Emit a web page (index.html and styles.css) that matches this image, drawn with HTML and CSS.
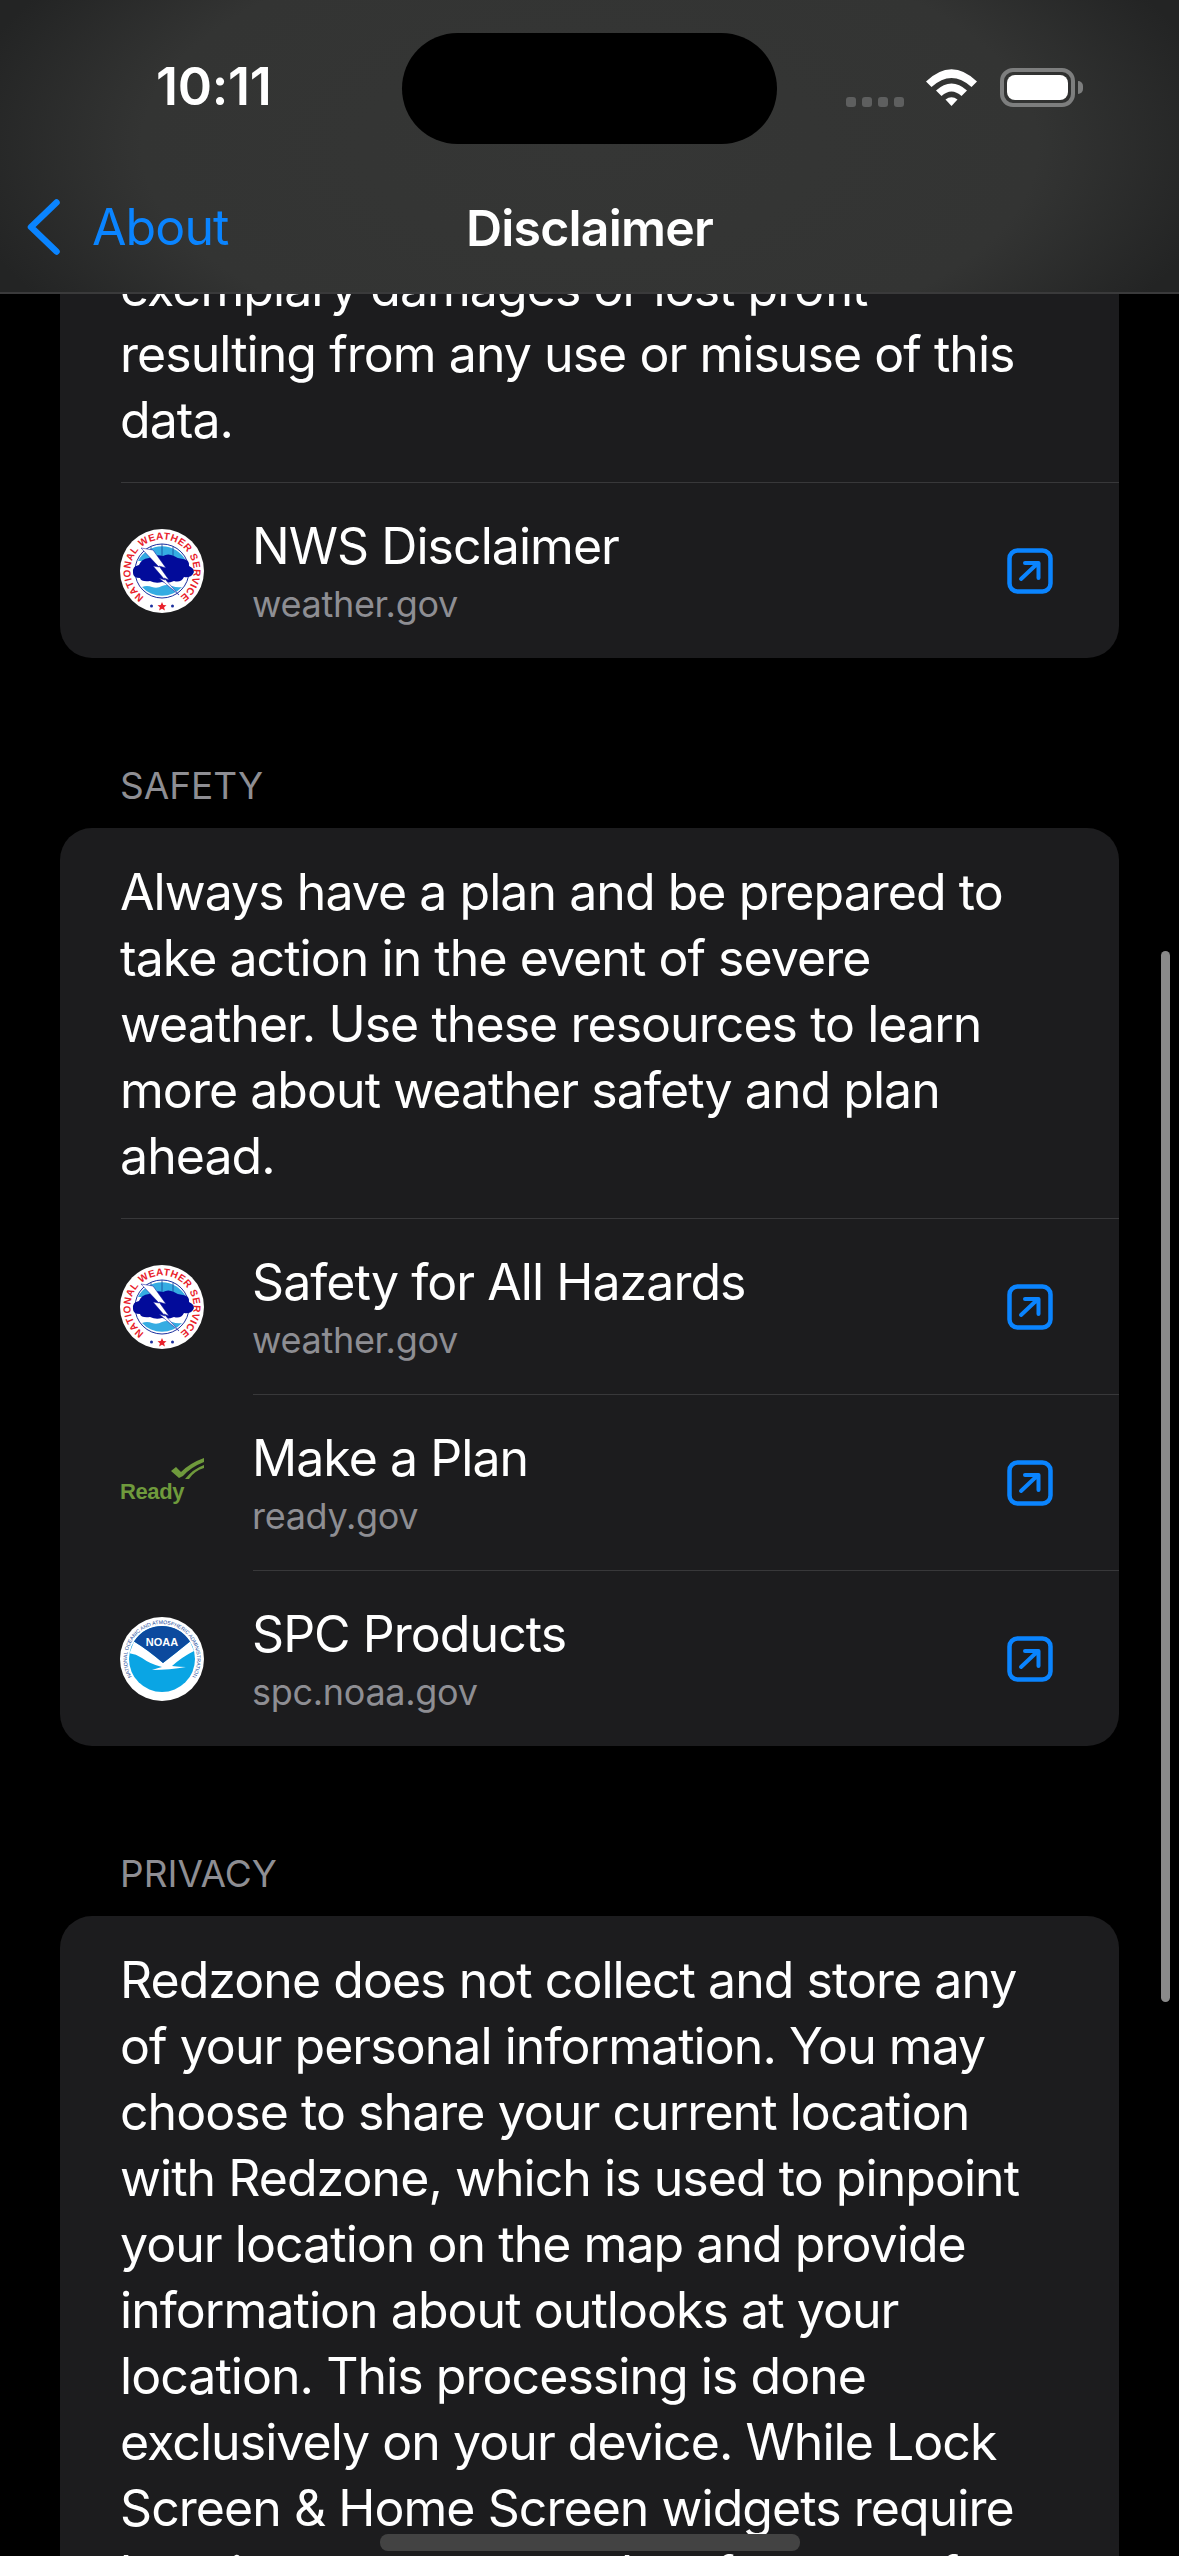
FILE: index.html
```html
<!DOCTYPE html>
<html lang="en">
<head>
    <meta charset="UTF-8">
    <title>Disclaimer</title>
    <link rel="stylesheet" href="styles.css">
</head>
<body>
    <svg class="defs" width="0" height="0">
        <defs>
            <path id="nws-ring" d="M42 73.500A31.500 31.500 0 1 1 42.010 73.500"/>
            <path id="noaa-top" d="M42 77A35 35 0 1 1 42.010 77"/>
            <path id="noaa-bottom" d="M42 2A40 40 0 1 0 41.990 2"/>
            <symbol id="logo-nws" viewBox="0 0 84 84">
                <circle cx="42" cy="42" r="42" fill="#fff"/>
                <circle cx="42" cy="42" r="27" fill="#fff" stroke="#1b2f9e" stroke-width="1"/>
                <path d="M18 32a27 27 0 0 1 48 0z" fill="#35ace2"/>
                <path d="M31 17v14M42 15v14M53 17v14" stroke="#14459c" stroke-width="0.800"/>
                <path d="M22 58a27 27 0 0 0 40 0q-5 1-10-1q-5-2-10 0q-5 3-10 1q-5-2-10 0z" fill="#35ace2"/>
                <path d="M13 44q-1-7 6-8q2-6 10-7q6-4 14-2q5-3 11 0q4 3 9 3q7 1 6 7q7 3 4 8q-3 4-9 3q-3 6-10 4q-6 3-12 1q-6 2-12-1q-9 1-10-3q-7 0-7-5z" fill="#020b9a"/>
                <path d="M21 19l12 2l13 18l-7-2l10 14l-5-2l15 17l-20-17l6 2l-12-14l6 1z" fill="#fff" stroke="#020b9a" stroke-width="0.500"/>
                <text class="logo-ring-text"><textPath href="#nws-ring" startOffset="50%" text-anchor="middle">NATIONAL WEATHER SERVICE</textPath></text>
                <path d="M42 73l1.300 3l3.200.3l-2.400 2l.8 3.100l-2.900-1.700l-2.900 1.700l.8-3.100l-2.400-2l3.200-.3z" fill="#e8202a"/>
                <circle cx="31.500" cy="77" r="1.500" fill="#1b2f9e"/>
                <circle cx="52.500" cy="77" r="1.500" fill="#1b2f9e"/>
            </symbol>
            <symbol id="icon-open" viewBox="0 0 46 46">
                <rect x="2.500" y="2.500" width="41" height="41" rx="8" fill="none" stroke="#0a84ff" stroke-width="4.500"/>
                <path d="M14 31l17-16M18 15h13.500v15" fill="none" stroke="#0a84ff" stroke-width="4" stroke-linecap="round" stroke-linejoin="round"/>
            </symbol>
        </defs>
    </svg>

    <div class="screen">
        <div class="scroller">
            <section class="group">
                <p class="blurb">You agree that in no event<br>exemplary damages or lost profit<br>resulting from any use or misuse of this<br>data.</p>
                <a class="link-row row-full" href="#">
                    <svg class="logo"><use href="#logo-nws"/></svg>
                    <div class="link-text"><div class="link-title">NWS Disclaimer</div><div class="link-host">weather.gov</div></div>
                    <svg class="open"><use href="#icon-open"/></svg>
                </a>
            </section>

            <h2 class="group-head">SAFETY</h2>
            <section class="group">
                <p class="blurb">Always have a plan and be prepared to<br>take action in the event of severe<br>weather. Use these resources to learn<br>more about weather safety and plan<br>ahead.</p>
                <a class="link-row row-full" href="#">
                    <svg class="logo"><use href="#logo-nws"/></svg>
                    <div class="link-text"><div class="link-title">Safety for All Hazards</div><div class="link-host">weather.gov</div></div>
                    <svg class="open"><use href="#icon-open"/></svg>
                </a>
                <a class="link-row" href="#">
                    <svg class="logo" viewBox="0 0 84 84">
                        <path d="M51 30l5-4l5 5q9-9 23-14v4q-13 5-21 14l-4 2z" fill="#6f9a3c"/>
                        <path d="M65 38q8-10 19-14v3q-10 3-15 11z" fill="#6f9a3c"/>
                        <text class="ready-word" x="0" y="58">Ready</text>
                    </svg>
                    <div class="link-text"><div class="link-title">Make a Plan</div><div class="link-host">ready.gov</div></div>
                    <svg class="open"><use href="#icon-open"/></svg>
                </a>
                <a class="link-row" href="#">
                    <svg class="logo" viewBox="0 0 84 84">
                        <circle cx="42" cy="42" r="42" fill="#fff"/>
                        <circle cx="42" cy="42" r="33" fill="#0aa5e4"/>
                        <path d="M14 24.500Q28 33 43 46Q56 36 70 24.500L74 34Q62 40 52 49Q60 50 66 50Q50 53 32 53Q38 51 42 50Q30 47 22 41Q16 37 9.500 36.300z" fill="#fff"/>
                        <path d="M14 24.500A33 33 0 0 1 70 24.500Q56 36 43 46Q28 33 14 24.500z" fill="#0c4a9e"/>
                        <text class="noaa-word" x="42" y="29" text-anchor="middle">NOAA</text>
                        <text class="noaa-ring"><textPath href="#noaa-top" startOffset="50%" text-anchor="middle">NATIONAL OCEANIC AND ATMOSPHERIC ADMINISTRATION</textPath></text>
                        <text class="noaa-ring"><textPath href="#noaa-bottom" startOffset="50%" text-anchor="middle">U.S. DEPARTMENT OF COMMERCE</textPath></text>
                    </svg>
                    <div class="link-text"><div class="link-title">SPC Products</div><div class="link-host">spc.noaa.gov</div></div>
                    <svg class="open"><use href="#icon-open"/></svg>
                </a>
            </section>

            <h2 class="group-head">PRIVACY</h2>
            <section class="group">
                <p class="blurb">Redzone does not collect and store any<br>of your personal information. You may<br>choose to share your current location<br>with Redzone, which is used to pinpoint<br>your location on the map and provide<br>information about outlooks at your<br>location. This processing is done<br>exclusively on your device. While Lock<br>Screen &amp; Home Screen widgets require<br>location access to update forecasts for</p>
            </section>
        </div>

        <header class="topbar">
            <div class="status">
                <span class="clock">10:11</span>
                <div class="island"></div>
                <div class="status-icons">
                    <div class="signal"><i></i><i></i><i></i><i></i></div>
                    <svg class="wifi" width="51" height="37" viewBox="0 0 51 37">
                        <path d="M0 12.500Q25.500-12 51 12.500L45.500 18Q25.500 0 5.500 18z" fill="#fff"/>
                        <path d="M10 21.500Q25.500 7.500 41 21.500L35.500 27Q25.500 18 15.500 27z" fill="#fff"/>
                        <path d="M19.500 30.500Q25.500 26 31.500 30.500L25.500 37z" fill="#fff"/>
                    </svg>
                    <div class="battery"><div class="battery-fill"></div></div>
                </div>
            </div>
            <div class="navrow">
                <a class="back" href="#">
                    <svg width="33" height="56" viewBox="0 0 33 56"><path d="M29.500 3.500L4 28l25.500 24.500" fill="none" stroke="#0a84ff" stroke-width="6.500" stroke-linecap="round" stroke-linejoin="round"/></svg>
                    <span>About</span>
                </a>
                <div class="nav-title">Disclaimer</div>
            </div>
        </header>

        <div class="scroll-thumb"></div>
        <div class="home-bar"></div>
    </div>
</body>
</html>
```

FILE: styles.css
```css
*{box-sizing:border-box;}
html,body{margin:0;padding:0;background:#000;}
body{font-family:"Inter","Liberation Sans",sans-serif;color:#fff;}
a{color:inherit;text-decoration:none;}
.defs{position:absolute;}

.screen{position:relative;width:1179px;height:2556px;overflow:hidden;background:#000;}
.scroller{padding:158px 60px 0;}

/* cards */
.group{background:#1c1c1e;border-radius:32px;overflow:hidden;}
.group-head{margin:0;padding:0 0 20px 60px;height:170px;display:flex;align-items:flex-end;font-size:37px;font-weight:400;line-height:44px;color:#8e8e93;}
.blurb{margin:0;padding:31px 60px 29px;font-size:50px;line-height:66px;letter-spacing:-.95px;white-space:nowrap;}

/* rows */
.link-row{display:flex;align-items:center;height:176px;margin-left:193px;position:relative;border-top:1px solid #38383a;}
.link-row.row-full{margin-left:61px;}
.link-row.row-full .link-text{margin-left:131px;}
.link-row .logo{position:absolute;left:-133px;top:46px;width:84px;height:84px;}
.link-row.row-full .logo{left:-1px;}
.link-text{flex:1;margin-left:-1px;}
.link-title{font-size:50px;line-height:62px;letter-spacing:-.95px;}
.link-host{font-size:36px;line-height:46px;margin-top:4px;color:#8e8e93;letter-spacing:-.3px;}
.open{width:46px;height:46px;margin-right:66px;flex:none;}

/* logos */
.logo-ring-text{font-family:"Liberation Sans",sans-serif;font-weight:700;font-size:10px;fill:#e8202a;letter-spacing:.4px;}
.ready-word{font-family:"Liberation Sans",sans-serif;font-weight:700;font-size:22px;fill:#6f9a3c;letter-spacing:-.4px;}
.noaa-word{font-family:"Liberation Sans",sans-serif;font-weight:700;font-size:11px;fill:#fff;}
.noaa-ring{font-family:"Liberation Sans",sans-serif;font-size:5.200px;fill:#1a4d9c;}

/* top bar */
.topbar{position:absolute;left:0;top:0;width:100%;height:294px;border-bottom:2px solid #3a3a3b;background:radial-gradient(ellipse 640px 300px at 50% 50%,#353635 0,#333433 70%,#232424 100%);}
.status{position:relative;height:148px;}
.clock{position:absolute;left:156px;top:57px;font-size:52px;line-height:60px;font-weight:600;letter-spacing:-.3px;}
.island{position:absolute;left:402px;top:33px;width:375px;height:111px;border-radius:56px;background:#000;}
.status-icons{position:absolute;left:846px;top:68px;display:flex;align-items:flex-end;}
.signal{display:flex;gap:6px;margin-right:22px;}
.signal i{display:block;width:10px;height:10px;border-radius:3px;background:#5e5f5f;}
.wifi{display:block;margin-bottom:1px;}
.battery{width:75px;height:39px;margin-left:23px;border:4px solid #7d7e7e;border-radius:13px;padding:3px;position:relative;}
.battery:after{content:"";position:absolute;right:-12px;top:9px;width:5px;height:13px;border-radius:0 6px 6px 0;background:#7d7e7e;}
.battery-fill{height:100%;background:#fff;border-radius:8px;}

.navrow{display:flex;align-items:center;justify-content:center;height:144px;position:relative;}
.back{position:absolute;left:27px;top:51px;display:flex;align-items:center;color:#0a84ff;font-size:50px;line-height:56px;letter-spacing:-.9px;}
.back span{margin-left:32px;}
.nav-title{font-size:50px;line-height:60px;font-weight:600;letter-spacing:-.8px;margin-top:16px;}

.scroll-thumb{position:absolute;left:1161px;top:951px;width:9px;height:1051px;border-radius:5px;background:#8a8a8a;}
.home-bar{position:absolute;left:380px;top:2534px;width:420px;height:17px;border-radius:8px;background:#434343;}
```
